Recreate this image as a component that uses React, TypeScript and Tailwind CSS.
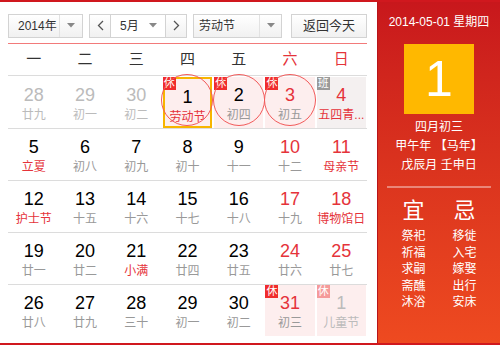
import React from 'react';

type Day = {
  n: number;
  lunar: string;
  muted?: boolean; // other month
  weekend?: boolean;
  fest?: boolean; // lunar text in red
  bg?: 'pink' | 'gray';
  badge?: '休' | '班';
  badgeFaded?: boolean;
  circle?: boolean;
  selected?: boolean;
};

const WEEK = ['一', '二', '三', '四', '五', '六', '日'];

const ROWS: Day[][] = [
  [
    { n: 28, lunar: '廿九', muted: true },
    { n: 29, lunar: '初一', muted: true },
    { n: 30, lunar: '初二', muted: true },
    { n: 1, lunar: '劳动节', fest: true, bg: 'pink', badge: '休', circle: true, selected: true },
    { n: 2, lunar: '初四', bg: 'pink', badge: '休', circle: true },
    { n: 3, lunar: '初五', weekend: true, bg: 'pink', badge: '休', circle: true },
    { n: 4, lunar: '五四青...', weekend: true, fest: true, bg: 'gray', badge: '班' },
  ],
  [
    { n: 5, lunar: '立夏', fest: true },
    { n: 6, lunar: '初八' },
    { n: 7, lunar: '初九' },
    { n: 8, lunar: '初十' },
    { n: 9, lunar: '十一' },
    { n: 10, lunar: '十二', weekend: true },
    { n: 11, lunar: '母亲节', weekend: true, fest: true },
  ],
  [
    { n: 12, lunar: '护士节', fest: true },
    { n: 13, lunar: '十五' },
    { n: 14, lunar: '十六' },
    { n: 15, lunar: '十七' },
    { n: 16, lunar: '十八' },
    { n: 17, lunar: '十九', weekend: true },
    { n: 18, lunar: '博物馆日', weekend: true, fest: true },
  ],
  [
    { n: 19, lunar: '廿一' },
    { n: 20, lunar: '廿二' },
    { n: 21, lunar: '小满', fest: true },
    { n: 22, lunar: '廿四' },
    { n: 23, lunar: '廿五' },
    { n: 24, lunar: '廿六', weekend: true },
    { n: 25, lunar: '廿七', weekend: true },
  ],
  [
    { n: 26, lunar: '廿八' },
    { n: 27, lunar: '廿九' },
    { n: 28, lunar: '三十' },
    { n: 29, lunar: '初一' },
    { n: 30, lunar: '初二' },
    { n: 31, lunar: '初三', weekend: true, bg: 'pink', badge: '休' },
    { n: 1, lunar: '儿童节', muted: true, bg: 'pink', badge: '休', badgeFaded: true },
  ],
];

const YI = ['祭祀', '祈福', '求嗣', '斋醮', '沐浴'];
const JI = ['移徙', '入宅', '嫁娶', '出行', '安床'];

const Caret = () => (
  <svg width="8" height="5" viewBox="0 0 8 5" className="fill-[#888]">
    <path d="M0 0h8L4 4.5z" />
  </svg>
);

const Chevron = ({ dir }: { dir: 'l' | 'r' }) => (
  <svg width="7" height="11" viewBox="0 0 7 11" fill="none" stroke="#555" strokeWidth="1.3">
    <path d={dir === 'l' ? 'M6 1L1.5 5.5 6 10' : 'M1 1l4.5 4.5L1 10'} />
  </svg>
);

const ctrl = 'h-6 border border-[#d3d3d3] bg-gradient-to-b from-white to-[#f1f1f1] flex items-center text-[12px] text-[#333] whitespace-nowrap';

function Cell({ d }: { d: Day }) {
  const numColor = d.muted ? 'text-[#bbb]' : d.weekend ? 'text-[#e5333a]' : 'text-black';
  const lunarColor = d.muted ? 'text-[#bbb]' : d.fest ? 'text-[#e5333a]' : 'text-[#999]';
  const bg = d.bg === 'pink' ? 'bg-[#fdeeee]' : d.bg === 'gray' ? 'bg-[#f4f0f0]' : '';
  return (
    <div className="relative flex-1 h-[51px] px-px">
      <div
        className={`relative h-full flex flex-col items-center pt-[8px] ${bg} ${
          d.selected ? 'border-2 border-[#f7b500] pt-[6px]' : ''
        }`}
      >
        <div className={`text-[18px] leading-[20px] ${numColor}`}>{d.n}</div>
        <div className={`text-[12px] leading-[16px] mt-[2px] whitespace-nowrap ${lunarColor}`}>{d.lunar}</div>
      </div>
      {d.badge && (
        <div
          className={`absolute left-px top-0 w-[13px] h-[13px] flex items-center justify-center text-[11px] leading-none text-white ${
            d.badge === '班' ? 'bg-[#9a9a9a]' : d.badgeFaded ? 'bg-[#f59a9a]' : 'bg-[#f02c2c]'
          }`}
        >
          {d.badge}
        </div>
      )}
      {d.circle && (
        <div className="absolute left-1/2 top-[-3px] -translate-x-1/2 w-[52px] h-[52px] rounded-full border border-[#f25a5a] pointer-events-none" />
      )}
    </div>
  );
}

export default function App() {
  return (
    <div
      className="w-[500px] h-[345px] flex border-t-2 border-b-2 border-[#d0181e] bg-white"
      style={{ fontFamily: '"Liberation Sans", Arial, "Noto Sans CJK SC", sans-serif' }}
    >
      {/* left: calendar */}
      <div className="w-[377px] pl-2 pr-[10px] flex flex-col">
        <div className="flex items-center h-[41px] pt-[6px]">
          <div className={`${ctrl} w-[75px]`}>
            <span className="pl-[9px] flex-1 min-w-0">2014年</span>
            <span className="w-[23px] h-full flex items-center justify-center border-l border-[#e2e2e2]">
              <Caret />
            </span>
          </div>
          <div className={`${ctrl} w-[98px] ml-[6px]`}>
            <span className="w-[21px] h-full flex items-center justify-center border-r border-[#d3d3d3]">
              <Chevron dir="l" />
            </span>
            <span className="flex-1 flex items-center pl-[9px] pr-[8px] justify-between bg-white h-full">
              <span>5月</span>
              <Caret />
            </span>
            <span className="w-[21px] h-full flex items-center justify-center border-l border-[#d3d3d3]">
              <Chevron dir="r" />
            </span>
          </div>
          <div className={`${ctrl} w-[89px] ml-[6px] !bg-white`}>
            <span className="pl-[5px] flex-1 min-w-0">劳动节</span>
            <span className="w-[22px] h-full flex items-center justify-center border-l border-[#e2e2e2]">
              <Caret />
            </span>
          </div>
          <div className={`${ctrl} w-[76px] ml-[9px] justify-center text-[13px]`}>返回今天</div>
        </div>
        <div className="h-px bg-[#f27a7a]" />
        <div className="flex h-[32px] items-center border-b border-[#dcdcdc]">
          {WEEK.map((w, i) => (
            <div
              key={w}
              className={`flex-1 text-center text-[15px] ${i >= 5 ? 'text-[#e5333a]' : 'text-[#333]'}`}
            >
              {w}
            </div>
          ))}
        </div>
        {ROWS.map((row, ri) => (
          <div key={ri} className={`flex ${ri > 0 ? 'border-t border-[#dcdcdc]' : 'pt-px'}`}>
            {row.map((d, ci) => (
              <Cell key={ci} d={d} />
            ))}
          </div>
        ))}
      </div>

      {/* right: today panel */}
      <div className="flex-1 border-l border-[#b8141a] bg-gradient-to-b from-[#c8171c] to-[#ee4a20] text-white flex flex-col items-center">
        <div className="mt-[12px] text-[12px] leading-[16px]">2014-05-01 星期四</div>
        <div className="mt-[14px] w-[70px] h-[70px] bg-[#ffb800] flex items-center justify-center text-[50px] leading-none">
          1
        </div>
        <div className="mt-[4px] text-[12px] leading-[19px] text-center">
          <div>四月初三</div>
          <div>甲午年 【马年】</div>
          <div>戊辰月 壬申日</div>
        </div>
        <div className="mt-[11px] w-[104px] h-[2px] bg-white/40" />
        <div className="mt-[10px] grid grid-cols-2 gap-x-[11px]">
          <div className="w-[40px] flex flex-col items-center">
            <div className="text-[22px] leading-[26px]">宜</div>
            <div className="mt-[4px] text-[12px] leading-[16.5px] text-center">
              {YI.map((t) => (
                <div key={t}>{t}</div>
              ))}
            </div>
          </div>
          <div className="w-[40px] flex flex-col items-center">
            <div className="text-[22px] leading-[26px]">忌</div>
            <div className="mt-[4px] text-[12px] leading-[16.5px] text-center">
              {JI.map((t) => (
                <div key={t}>{t}</div>
              ))}
            </div>
          </div>
        </div>
      </div>
    </div>
  );
}
